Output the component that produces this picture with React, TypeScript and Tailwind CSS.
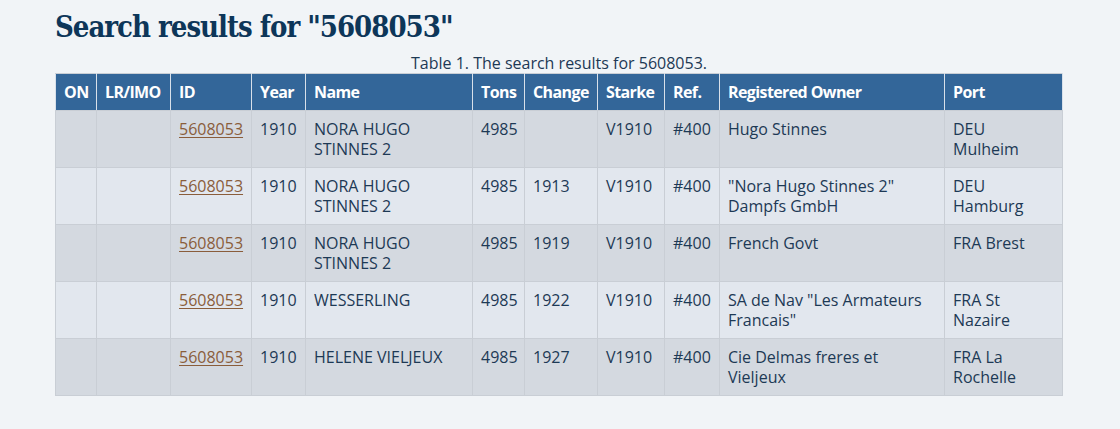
const columns = [
  { label: 'ON', width: 'w-[41px]' },
  { label: 'LR/IMO', width: 'w-[74px]' },
  { label: 'ID', width: 'w-[81px]' },
  { label: 'Year', width: 'w-[54px]' },
  { label: 'Name', width: 'w-[167px]' },
  { label: 'Tons', width: 'w-[52px]' },
  { label: 'Change', width: 'w-[73px]' },
  { label: 'Starke', width: 'w-[67px]' },
  { label: 'Ref.', width: 'w-[55px]' },
  { label: 'Registered Owner', width: 'w-[225px]' },
  { label: 'Port', width: 'w-[118px]' },
];

type Row = {
  name: string;
  change: string;
  owner: string;
  port: string;
};

const rows: Row[] = [
  { name: 'NORA HUGO STINNES 2', change: '', owner: 'Hugo Stinnes', port: 'DEU Mulheim' },
  {
    name: 'NORA HUGO STINNES 2',
    change: '1913',
    owner: '"Nora Hugo Stinnes 2" Dampfs GmbH',
    port: 'DEU Hamburg',
  },
  { name: 'NORA HUGO STINNES 2', change: '1919', owner: 'French Govt', port: 'FRA Brest' },
  {
    name: 'WESSERLING',
    change: '1922',
    owner: 'SA de Nav "Les Armateurs Francais"',
    port: 'FRA St Nazaire',
  },
  {
    name: 'HELENE VIELJEUX',
    change: '1927',
    owner: 'Cie Delmas freres et Vieljeux',
    port: 'FRA La Rochelle',
  },
];

const td = 'border border-[#c9ced5] px-2 py-2 align-top';

const App = () => (
  <div className="min-h-[429px] bg-[#f1f4f7] px-[55px] pt-[5px] font-['Open_Sans',sans-serif] text-[16px] leading-5 text-[#1d3955]">
    <h1 className="font-['DejaVu_Serif',serif] text-[29px] leading-[44px] font-bold font-stretch-condensed tracking-[-1px] text-[#0d3659]">
      Search results for "5608053"
    </h1>
    <table className="mt-[4px] w-[1007px] table-fixed border-collapse">
      <caption className="h-[20px] text-[16px] leading-5 text-[#1d3955]">
        Table 1. The search results for 5608053.
      </caption>
      <thead>
        <tr className="bg-[#336699] text-left text-white">
          {columns.map((c) => (
            <th
              key={c.label}
              className={`${c.width} border border-[#c9ced5] border-x-[#d8e0ea] px-2 py-2 font-bold tracking-[-0.6px] whitespace-nowrap`}
            >
              {c.label}
            </th>
          ))}
        </tr>
      </thead>
      <tbody>
        {rows.map((r, i) => (
          <tr key={i} className={i % 2 === 0 ? 'bg-[#d4d9e0]' : 'bg-[#e2e7ee]'}>
            <td className={td} />
            <td className={td} />
            <td className={td}>
              <a href="#" className="text-[#8a5d3b] underline underline-offset-2">
                5608053
              </a>
            </td>
            <td className={td}>1910</td>
            <td className={`${td} h-[57px]`}>{r.name}</td>
            <td className={td}>4985</td>
            <td className={td}>{r.change}</td>
            <td className={td}>V1910</td>
            <td className={td}>#400</td>
            <td className={td}>{r.owner}</td>
            <td className={td}>{r.port}</td>
          </tr>
        ))}
      </tbody>
    </table>
  </div>
);

export default App;
